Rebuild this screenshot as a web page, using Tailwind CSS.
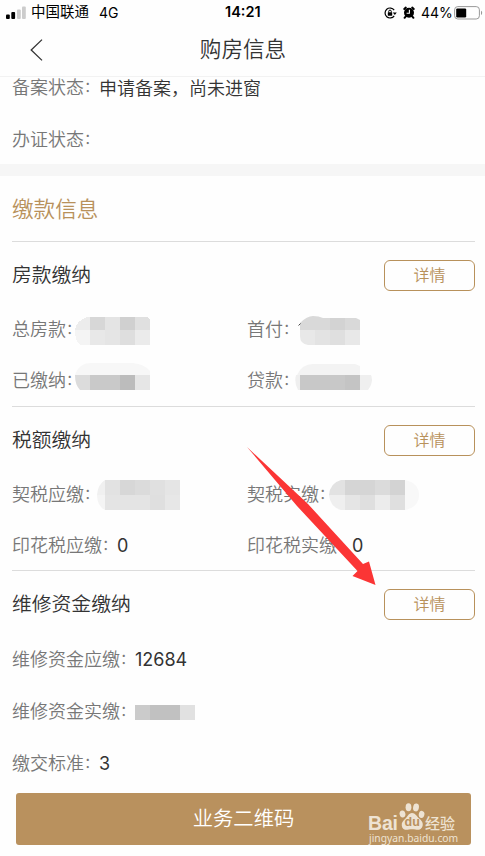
<!DOCTYPE html>
<html lang="zh-CN">

<head>
    <meta charset="UTF-8">
    <title>购房信息</title>
    <script src="https://cdn.jsdelivr.net/npm/@tailwindcss/browser@4"></script>
</head>

<body class="relative w-[485px] h-[856px] overflow-hidden bg-[#fefefe] font-['Inter','Noto_Sans_CJK_SC',sans-serif] font-[350] text-[18px] text-[#333]">
    <!-- status bar + title -->
    <header class="h-[77px] border-b border-[#f2f2f2]">
        <div class="relative flex items-center h-[25px] pl-[6px] pr-[2px] text-black text-[14px] font-normal leading-none">
            <svg class="w-[20px] h-[13px] -mt-[1px]" viewBox="0 0 20 13">
                <rect x="0" y="8.500" width="3.800" height="4.500" rx="1" />
                <rect x="5.300" y="6" width="3.800" height="7" rx="1" />
                <rect x="11" y="3.500" width="3.800" height="9.500" rx="1" fill="#ccc" />
                <rect x="16" y="0.500" width="3.800" height="12.500" rx="1" fill="#ccc" />
            </svg>
            <span class="ml-[5px] text-[14.5px]">中国联通</span>
            <span class="ml-[10px]">4G</span>
            <span class="absolute left-[225px] text-[14.5px] font-semibold">14:21</span>
            <svg class="ml-auto w-[13px] h-[12px]" viewBox="0 0 13 12">
                <path d="M10.2 3.200A5 5 0 1 0 10.200 8.800" fill="none" stroke="#000" stroke-width="1.2" />
                <path d="M8.800 5.400h4l-2 2.600z" />
                <rect x="3.800" y="5.300" width="4.400" height="3.400" rx=".5" />
                <path d="M4.700 5.500V4.400a1.300 1.300 0 0 1 2.600 0v1.100" fill="none" stroke="#000" />
            </svg>
            <svg class="ml-[6px] w-[12px] h-[13px]" viewBox="0 0 12 13">
                <circle cx="6" cy="6.800" r="5" />
                <path d="M1.300 3 2.800 1.600M10.700 3 9.200 1.600M2.600 10.600 1.600 11.800M9.400 10.600l1 1.200" stroke="#000" stroke-width="2" stroke-linecap="round" />
                <path d="M6.400 3.800v3.400H3.600" fill="none" stroke="#fff" stroke-width="1.1" />
            </svg>
            <span class="ml-[6px] w-[31px] text-[14px]">44%</span>
            <svg class="ml-[2px] w-[29px] h-[14px]" viewBox="0 0 29 14">
                <rect x=".6" y=".6" width="24.800" height="12.400" rx="3.200" fill="none" stroke="#999" stroke-width="1" />
                <rect x="2.200" y="2.400" width="10" height="9" rx="1.200" />
                <path d="M27 4.800c1.600.6 1.600 3.600 0 4.200z" fill="#999" />
            </svg>
        </div>
        <div class="relative flex items-center justify-center h-[49px]">
            <svg class="absolute left-[30px] top-[14px] w-[13px] h-[22px]" viewBox="0 0 13 22" fill="none" stroke="#333" stroke-width="1.3">
                <path d="M12 .6 1.200 11 12 21.400" />
            </svg>
            <h1 class="text-[21.6px] leading-none pl-[1px]">购房信息</h1>
        </div>
    </header>

    <!-- filing status -->
    <section class="h-[87px] pl-[12px]">
        <div class="flex items-center h-[22px]">
            <span class="text-[#777] -mt-[2px]">备案状态</span><span class="w-[15px] text-[15px] text-[#777] -mt-[2px]">：</span><span>申请备案，尚未进窗</span>
        </div>
        <div class="flex items-center h-[52px] mt-[14px]">
            <span class="text-[#777]">办证状态</span><span class="w-[15px] text-[15px] text-[#777]">：</span>
        </div>
    </section>
    <div class="h-[12px] bg-[#f6f6f6]"></div>

    <main class="pl-[12px] pr-[10px]">
        <h2 class="flex items-center h-[65px] pt-[2px] text-[21.6px] text-[#b8915b]">缴款信息</h2>

        <section class="h-[165px] border-t border-[#dcdcdc]">
            <div class="flex items-center justify-between h-[62px] pt-[4px]">
                <h3 class="pt-[1px] text-[19.8px]">房款缴纳</h3>
                <button class="w-[91px] h-[31px] rounded-[6px] border border-[#b8915b] text-[16px] leading-none text-[#b8915b] pb-[1px]">详情</button>
            </div>
            <div class="grid grid-cols-[235px_1fr] text-[#777]">
                <div class="relative flex items-center h-[51px]">
                    <span>总房款</span><span class="w-[15px] text-[15px]">：</span>
                    <svg class="absolute left-[63px] top-[13px] w-[75px] h-[28px]" viewBox="0 0 75 28" shape-rendering="crispEdges">
                        <path d="M12 0h3v13H0Q2 3 12 0" fill="#ececec" />
                        <path d="M0 13h15v15H5Q0 24 0 13" fill="#f4f4f4" />
                        <path d="M15 0h15v13H15z" fill="#d7d7d7" />
                        <path d="M30 0h15v13H30z" fill="#e4e4e4" />
                        <path d="M45 0h15v13H45z" fill="#d0d0d0" />
                        <path d="M60 0h12l3 2v11H60z" fill="#e0e0e0" />
                        <path d="M15 13h15v15H15z" fill="#e8e8e8" />
                        <path d="M30 13h15v15H30z" fill="#e5e5e5" />
                        <path d="M45 13h15v15H45z" fill="#dedede" />
                        <path d="M60 13h15v15H60z" fill="#ebebeb" />
                    </svg>
                </div>
                <div class="relative flex items-center h-[51px]">
                    <span>首付</span><span class="w-[15px] text-[15px]">：</span>
                    <svg class="absolute left-[51px] top-[11px] w-[62px] h-[30px]" viewBox="0 0 62 30">
                        <path d="M2 15V8Q9 1 15 1T25 3H58l4 2V15z" fill="#d9d9d9" />
                        <path d="M32 3h15v12H32z" fill="#d3d3d3" />
                        <path d="M2 15h60v15H10Q2 29 2 21z" fill="#e8e8e8" />
                        <path d="M17 15h15v15H17z" fill="#e3e3e3" />
                        <path d="M32 15h15v15H32z" fill="#dfdfdf" />
                        <path d="M.6 10.500 2.500 8.500" stroke="#444" />
                    </svg>
                </div>
                <div class="relative flex items-center h-[51px]">
                    <span>已缴纳</span><span class="w-[15px] text-[15px]">：</span>
                    <svg class="absolute left-[63px] top-[8px] w-[75px] h-[27px]" viewBox="0 0 75 27">
                        <path d="M0 12Q4 0 16 0H58Q69 1 75 8v4z" fill="#f7f7f7" />
                        <path d="M0 12h15v15H5Q0 22 0 12" fill="#dcdcdc" />
                        <path d="M15 12h30v15H15z" fill="#c9c9c9" />
                        <path d="M45 12h15v15H45z" fill="#bcbcbc" />
                        <path d="M60 12h15v15H60z" fill="#e6e6e6" />
                    </svg>
                </div>
                <div class="relative flex items-center h-[51px]">
                    <span>贷款</span><span class="w-[15px] text-[15px]">：</span>
                    <svg class="absolute left-[48px] top-[9px] w-[77px] h-[26px]" viewBox="0 0 77 26">
                        <path d="M2 11Q7 0 18 0H60l5 2v9z" fill="#f3f3f3" />
                        <path d="M1 11H76Q79 18 73 26H3Q-1 19 1 11" fill="#efefef" />
                        <path d="M5 11h45v15H5z" fill="#c8c8c8" />
                        <path d="M50 11h15v15H50z" fill="#c4c4c4" />
                    </svg>
                </div>
            </div>
        </section>

        <section class="h-[164px] border-t border-[#dcdcdc]">
            <div class="flex items-center justify-between h-[62px] pt-[4px]">
                <h3 class="pt-[1px] text-[19.8px]">税额缴纳</h3>
                <button class="w-[91px] h-[31px] rounded-[6px] border border-[#b8915b] text-[16px] leading-none text-[#b8915b] pb-[1px]">详情</button>
            </div>
            <div class="grid grid-cols-[235px_1fr] text-[#777]">
                <div class="relative flex items-center h-[51px]">
                    <span>契税应缴</span><span class="w-[15px] text-[15px]">：</span>
                    <svg class="absolute left-[85px] top-[11px] w-[83px] h-[30px]" viewBox="0 0 83 30">
                        <path d="M8 0v15H0Q1 4 8 0" fill="#f0f0f0" />
                        <path d="M0 15h8v15Q0 26 0 15" fill="#f4f4f4" />
                        <path d="M8 0h15v15H8z" fill="#e2e2e2" />
                        <path d="M23 0h15v15H23z" fill="#d7d7d7" />
                        <path d="M38 0h15v15H38z" fill="#dbdbdb" />
                        <path d="M53 0h15v15H53z" fill="#e0e0e0" />
                        <path d="M68 0h15v15H68z" fill="#e5e5e5" />
                        <path d="M8 15h45v15H8z" fill="#e4e4e4" />
                        <path d="M53 15h15v15H53z" fill="#dfdfdf" />
                        <path d="M68 15h15v15H68z" fill="#e7e7e7" />
                    </svg>
                </div>
                <div class="relative flex items-center h-[51px]">
                    <span>契税实缴</span><span class="w-[15px] text-[15px]">：</span>
                    <svg class="absolute left-[82px] top-[11px] w-[91px] h-[30px]" viewBox="0 0 91 30">
                        <path d="M12 0H16V15H0Q1 3 12 0" fill="#e2e2e2" />
                        <path d="M0 15h16v15H12Q1 27 0 15" fill="#efefef" />
                        <path d="M76 0Q90 3 90 15T76 30z" fill="#f8f8f8" />
                        <path d="M16 0h30v15H16z" fill="#d5d5d5" />
                        <path d="M46 0h15v15H46z" fill="#dbdbdb" />
                        <path d="M61 0h15v15H61z" fill="#d3d3d3" />
                        <path d="M16 15h15v15H16z" fill="#e5e5e5" />
                        <path d="M31 15h15v15H31z" fill="#dfdfdf" />
                        <path d="M46 15h15v15H46z" fill="#ececec" />
                        <path d="M61 15h15v15H61z" fill="#dfdfdf" />
                    </svg>
                </div>
                <div class="flex items-center h-[51px]">
                    <span>印花税应缴</span><span class="w-[15px] text-[15px]">：</span><span class="font-normal text-[#333]">0</span>
                </div>
                <div class="flex items-center h-[51px]">
                    <span>印花税实缴</span><span class="w-[15px] text-[15px]">：</span><span class="font-normal text-[#333]">0</span>
                </div>
            </div>
        </section>

        <section class="border-t border-[#dcdcdc]">
            <div class="flex items-center justify-between h-[62px] pt-[5px]">
                <h3 class="text-[19.8px]">维修资金缴纳</h3>
                <button class="w-[91px] h-[31px] rounded-[6px] border border-[#b8915b] text-[16px] leading-none text-[#b8915b] pb-[1px]">详情</button>
            </div>
            <div class="text-[#777]">
                <div class="flex items-center h-[52px]">
                    <span>维修资金应缴</span><span class="w-[15px] text-[15px]">：</span><span class="font-normal text-[#333]">12684</span>
                </div>
                <div class="flex items-center h-[52px]">
                    <span>维修资金实缴</span><span class="w-[15px] text-[15px]">：</span>
                    <span class="flex h-[15px] mt-[3px]">
                        <i class="w-[15px] bg-[#cbcbcb]"></i>
                        <i class="w-[30px] bg-[#c1c1c1]"></i>
                        <i class="w-[15px] bg-[#e1e1e1]"></i>
                    </span>
                </div>
                <div class="flex items-center h-[52px]">
                    <span>缴交标准</span><span class="w-[15px] text-[15px]">：</span><span class="font-normal text-[#333]">3</span>
                </div>
            </div>
        </section>
    </main>

    <button class="relative block ml-[16px] mt-[4px] w-[455px] h-[52px] rounded-[3px] bg-[#b9915e] text-[20.3px] text-white">
        业务二维码
        <!-- watermark -->
        <span class="absolute left-[352px] top-[9px] w-[92px] h-[43px] text-[#eee3d3] text-left leading-none">
            <span class="absolute left-0 top-[12px] text-[19.5px] font-bold font-['Liberation_Sans',sans-serif] tracking-[-0.2px]">Bai</span>
            <svg class="absolute left-[31px] top-0 w-[26px] h-[30px]" viewBox="0 0 26 30" fill="#eee3d3">
                <ellipse cx="3.500" cy="12" rx="2.900" ry="3.600" transform="rotate(-12 3.5 12)" />
                <ellipse cx="9.500" cy="5.200" rx="2.900" ry="4" />
                <ellipse cx="17" cy="5.400" rx="2.900" ry="4" transform="rotate(10 17 5.4)" />
                <ellipse cx="22.600" cy="12.400" rx="2.800" ry="3.600" transform="rotate(12 22.6 12.4)" />
                <path d="M13 11c3.400 0 4.700 3.300 7.200 5.600 2.300 2 4.300 4.300 3.400 7.400-1 3.800-4.400 4.200-7.200 3.600-2.200-.5-4.400-.5-6.600 0-3.400.7-6.500-.2-7-3.900-.5-3 1.200-4.700 3.200-6.600C8.400 14.800 9.600 11 13 11z" />
            </svg>
            <span class="absolute left-[36.500px] top-[14px] text-[12.500px] font-bold text-[#b9915e] font-['Liberation_Sans',sans-serif]">du</span>
            <span class="absolute left-[57px] top-[14px] text-[15px] font-medium whitespace-nowrap">经验</span>
            <span class="absolute left-[1px] top-[31px] text-[10.300px] font-normal whitespace-nowrap font-['Noto_Sans',sans-serif]">jingyan.baidu.com</span>
        </span>
    </button>

    <!-- pointer to the last 详情 button -->
    <svg class="absolute left-[247px] top-[447px] w-[130px] h-[139px]" viewBox="0 0 130 139">
        <path d="M0 0 61 57 116 117 122 114.500 128.500 138 105.500 129 110.500 124 50 59z" fill="#fb3535" />
    </svg>
</body>

</html>
